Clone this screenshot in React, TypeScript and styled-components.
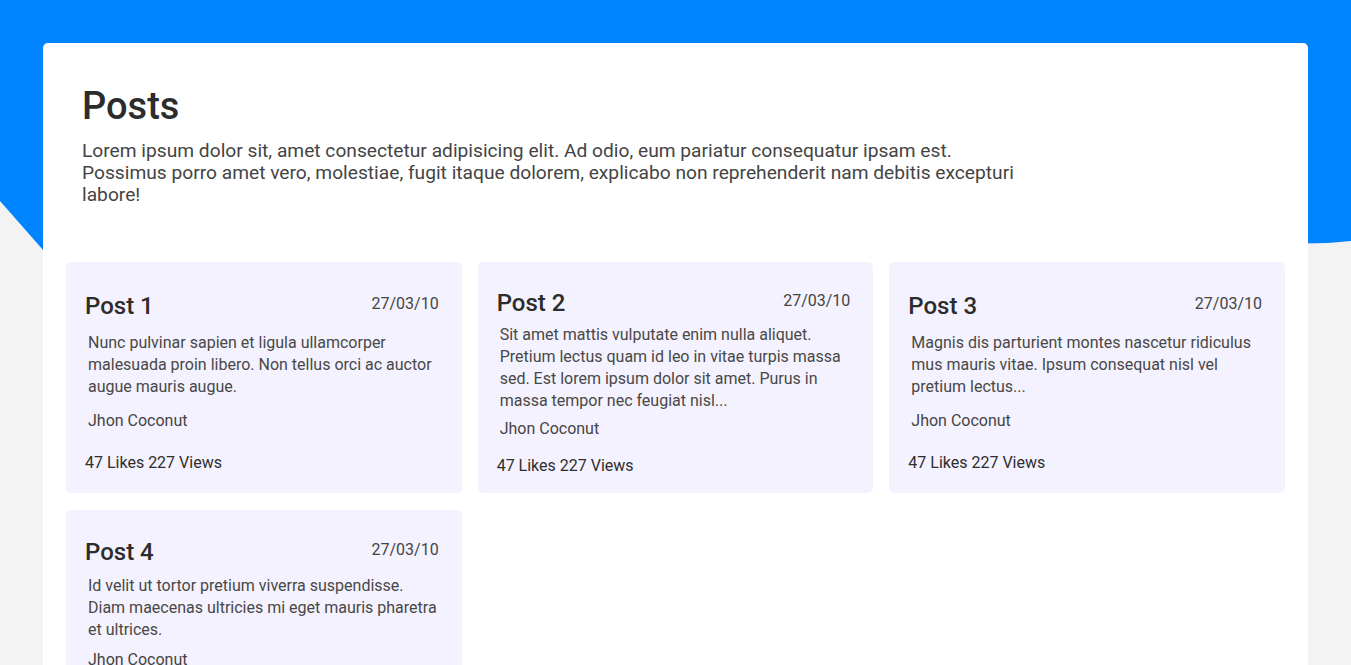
import React from "react";
import styled, { createGlobalStyle } from "styled-components";

const GlobalStyle = createGlobalStyle`
  body {
    margin: 0;
    background: #f3f3f3;
    font-family: Roboto, "Liberation Sans", Arial, sans-serif;
    color: #2c2c2c;
  }
`;

const Page = styled.div`
  position: relative;
  min-height: 100vh;
  padding-top: 43px;
  box-sizing: border-box;
`;

const Backdrop = styled.svg`
  position: absolute;
  top: 0;
  left: 0;
  width: 100%;
  height: 300px;
  z-index: 0;
`;

const Container = styled.main`
  position: relative;
  z-index: 1;
  margin: 0 43px;
  padding: 0 23px 40px;
  background: #ffffff;
  border-radius: 5px;
`;

const Header = styled.header`
  padding: 40px 16px 56px;
  h1 {
    margin: 0;
    font-size: 38px;
    font-weight: 500;
    line-height: 46px;
    color: #2c2c2c;
  }
  p {
    margin: 11px 0 0;
    max-width: 950px;
    font-size: 19.2px;
    line-height: 22px;
    color: #444444;
  }
`;

const Grid = styled.section`
  display: grid;
  grid-template-columns: repeat(3, 1fr);
  column-gap: 16px;
  row-gap: 17px;
`;

const Card = styled.article`
  display: flex;
  flex-direction: column;
  justify-content: space-around;
  min-height: 217px;
  padding: 27px 23px 16px 19px;
  background: #f4f2fe;
  border-radius: 5px;
  box-sizing: border-box;
`;

const CardHead = styled.div`
  display: flex;
  justify-content: space-between;
  align-items: flex-start;
  margin-bottom: 7px;
  h2 {
    margin: 0;
    font-size: 24px;
    font-weight: 500;
    line-height: 28px;
    color: #2c2c2c;
  }
  time {
    font-size: 16px;
    line-height: 24px;
    color: #444444;
  }
`;

const Body = styled.p`
  margin: 0 0 6px 3px;
  font-size: 16px;
  line-height: 22px;
  color: #484848;
`;

const Author = styled.div`
  margin: 0 0 15px 3px;
  font-size: 16px;
  line-height: 22px;
  color: #444444;
`;

const Stats = styled.div`
  font-size: 16px;
  line-height: 22px;
  color: #2e2e2e;
`;

const posts = [
  {
    title: "Post 1",
    body: "Nunc pulvinar sapien et ligula ullamcorper malesuada proin libero. Non tellus orci ac auctor augue mauris augue.",
  },
  {
    title: "Post 2",
    body: "Sit amet mattis vulputate enim nulla aliquet. Pretium lectus quam id leo in vitae turpis massa sed. Est lorem ipsum dolor sit amet. Purus in massa tempor nec feugiat nisl...",
  },
  {
    title: "Post 3",
    body: "Magnis dis parturient montes nascetur ridiculus mus mauris vitae. Ipsum consequat nisl vel pretium lectus...",
  },
  {
    title: "Post 4",
    body: "Id velit ut tortor pretium viverra suspendisse. Diam maecenas ultricies mi eget mauris pharetra et ultrices.",
  },
];

export default function App() {
  return (
    <Page>
      <GlobalStyle />
      <Backdrop viewBox="0 0 1351 300" preserveAspectRatio="none">
        <path
          d="M0 0 H1351 V241 Q1330 243.5 1300 243.5 V300 H87 L0 201 Z"
          fill="#0084ff"
        />
      </Backdrop>
      <Container>
        <Header>
          <h1>Posts</h1>
          <p>
            Lorem ipsum dolor sit, amet consectetur adipisicing elit. Ad odio,
            eum pariatur consequatur ipsam est. Possimus porro amet vero,
            molestiae, fugit itaque dolorem, explicabo non reprehenderit nam
            debitis excepturi labore!
          </p>
        </Header>
        <Grid>
          {posts.map((post) => (
            <Card key={post.title}>
              <CardHead>
                <h2>{post.title}</h2>
                <time>27/03/10</time>
              </CardHead>
              <Body>{post.body}</Body>
              <Author>Jhon Coconut</Author>
              <Stats>47 Likes 227 Views</Stats>
            </Card>
          ))}
        </Grid>
      </Container>
    </Page>
  );
}
